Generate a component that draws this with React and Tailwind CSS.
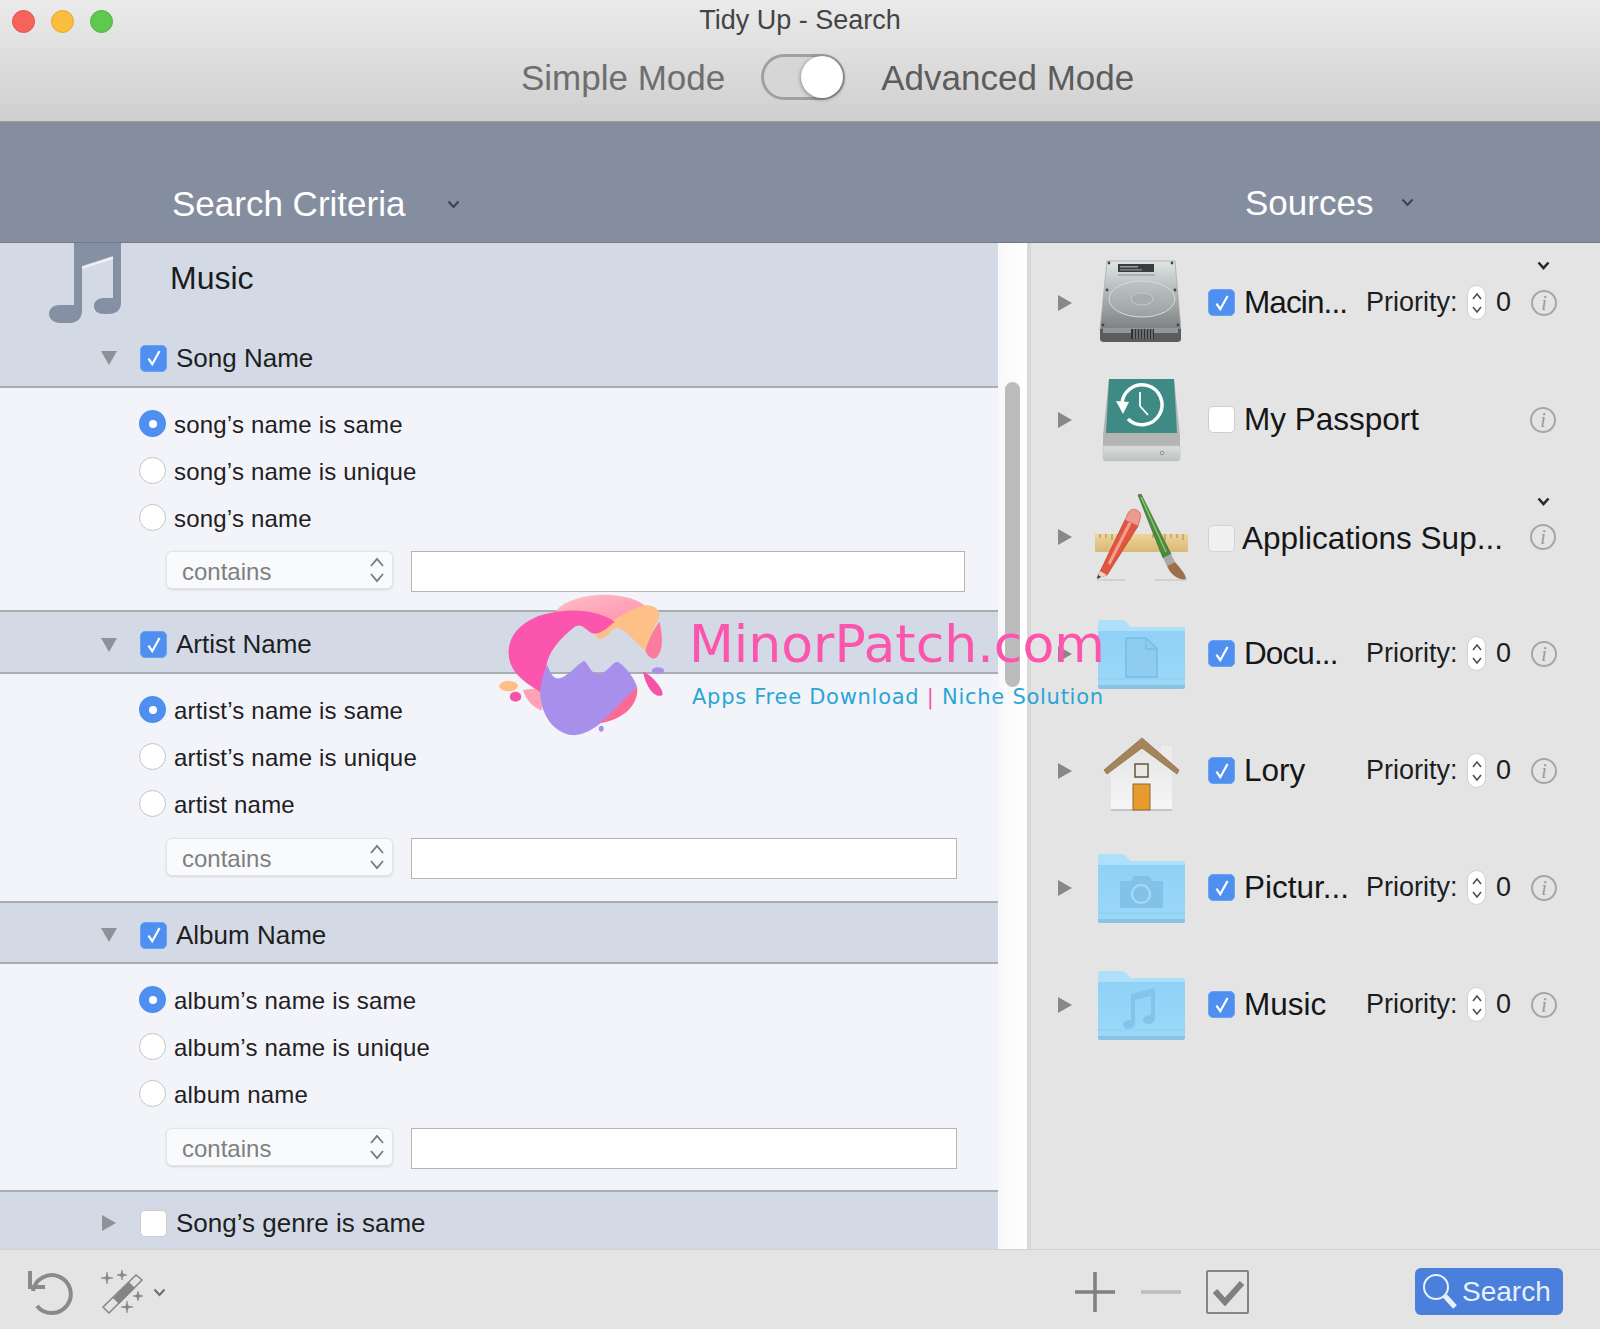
const sans = { fontFamily: '"Liberation Sans", Arial, sans-serif' };

const Check = () => (
  <svg viewBox="0 0 26 26" className="w-[18px] h-[20px]">
    <path d="M5 14l5.5 8L21 3" fill="none" stroke="#fff" strokeWidth="3.2" />
  </svg>
);

const Checkbox = ({ checked, dim }) => (
  <div
    className={
      checked
        ? 'w-[27px] h-[27px] shrink-0 rounded-[5px] bg-[#4f8ff0] border border-[#6aa2f4] flex items-center justify-center'
        : dim
          ? 'w-[27px] h-[27px] shrink-0 rounded-[5px] bg-[#f0f0f0] border border-[#d2d2d2]'
          : 'w-[27px] h-[27px] shrink-0 rounded-[5px] bg-white border border-[#cdcdcd]'
    }
  >
    {checked && <Check />}
  </div>
);

const Radio = ({ on }) => (
  <div
    className={
      on
        ? 'w-[27px] h-[27px] shrink-0 rounded-full bg-[#4f8ff0] flex items-center justify-center'
        : 'w-[27px] h-[27px] shrink-0 rounded-full bg-white border border-[#c4c4c4]'
    }
  >
    {on && <div className="w-[8px] h-[8px] rounded-full bg-white" />}
  </div>
);

const Tri = ({ open, color = '#8d9198' }) => (
  <svg viewBox="0 0 16 16" className="w-[16px] h-[16px] shrink-0">
    <path d={open ? 'M0 1H16L8 15Z' : 'M1 0V16L15 8Z'} fill={color} />
  </svg>
);

const Chevron = ({ color = '#3c4350', width = 2 }) => (
  <svg viewBox="0 0 13 9" className="w-[13px] h-[9px]">
    <path d="M1.5 1.5L6.5 7L11.5 1.5" fill="none" stroke={color} strokeWidth={width} />
  </svg>
);

const SectionHead = ({ label, checked, open, className }) => (
  <div className={`flex items-center pl-[101px] bg-[#d3dae5] ${className}`}>
    <Tri open={open} />
    <div className="ml-[23px]">
      <Checkbox checked={checked} />
    </div>
    <span className="ml-[9px] text-[26px] text-[#1d1f22]">{label}</span>
  </div>
);

const Options = ({ options, inputWidth, rowGap, className }) => (
  <div className={`bg-[#f2f4f9] pt-[12px] ${className}`}>
    {options.map((o, i) => (
      <div key={o} className="flex items-center h-[47px] pl-[139px]">
        <Radio on={i === 0} />
        <span className="ml-[8px] pt-[3px] text-[24px] tracking-[0.2px] text-[#1f2023]">{o}</span>
      </div>
    ))}
    <div className={`flex items-start pl-[166px] ${rowGap}`}>
      <div className="w-[227px] h-[38px] flex items-center justify-between pl-[15px] pr-[7px] rounded-[6px] bg-[#f9fafc] border border-[#e3e4e8] shadow-sm">
        <span className="pt-[3px] text-[24px] text-[#7f7f81]">contains</span>
        <svg viewBox="0 0 16 28" className="w-[16px] h-[28px]">
          <path d="M2 10L8 3L14 10M2 18L8 25L14 18" fill="none" stroke="#77797d" strokeWidth="1.8" />
        </svg>
      </div>
      <div className={`ml-[18px] h-[41px] bg-white border border-[#b4b4b4] ${inputWidth}`} />
    </div>
  </div>
);

const NoteIcon = () => (
  <svg viewBox="0 0 72 81" className="w-[72px] h-[81px]">
    <path
      d="M25 0H72V60C72 67 67 71 60 71H55C49 71 45 68 45 63C45 58 49 55 55 55H64V13L33 23V68C33 75 28 80 21 80H11C5 80 0 76 0 71C0 65 5 62 11 62H25Z"
      fill="#8590a5"
    />
    <path d="M33 25L64 15" stroke="#eef1f6" strokeWidth="2" />
  </svg>
);

const HddIcon = () => (
  <svg viewBox="0 0 95 90" className="w-[95px] h-[90px]">
    <defs>
      <linearGradient id="hdd" x1="0" y1="0" x2="0" y2="1">
        <stop offset="0" stopColor="#dfe6e6" />
        <stop offset="1" stopColor="#7b8080" />
      </linearGradient>
      <linearGradient id="plat" x1="0" y1="0" x2="0" y2="1">
        <stop offset="0" stopColor="#bcc5c5" />
        <stop offset="1" stopColor="#9aa1a1" />
      </linearGradient>
    </defs>
    <path d="M12 3H80L86 72H5Z" fill="url(#hdd)" stroke="#a6acac" strokeWidth="0.8" />
    <path d="M5 71H86V81Q86 84 82 84H9Q5 84 5 81Z" fill="#5a5d5f" />
    <path d="M8 70H83V75H8Z" fill="#93979a" />
    <ellipse cx="47" cy="41" rx="33" ry="18" fill="url(#plat)" stroke="#d7dddd" strokeWidth="1" />
    <ellipse cx="47" cy="41" rx="11" ry="6" fill="#a5adad" stroke="#c4cbcb" strokeWidth="1" />
    <rect x="23" y="6" width="36" height="8" fill="#3b3e40" />
    <rect x="25" y="8" width="18" height="1.5" fill="#9a9d9f" />
    <rect x="25" y="11" width="22" height="1.5" fill="#7d8082" />
    <path d="M23 17H60" stroke="#8a8f90" strokeWidth="1" />
    <rect x="36" y="71" width="23" height="10" fill="#2f3133" />
    <path d="M39 71V81M42 71V81M45 71V81M48 71V81M51 71V81M54 71V81M57 71V81" stroke="#a8abad" strokeWidth="1" />
    <circle cx="14" cy="5" r="1.4" fill="#444" />
    <circle cx="77" cy="5" r="1.4" fill="#444" />
    <circle cx="12" cy="32" r="1.4" fill="#444" />
    <circle cx="80" cy="32" r="1.4" fill="#444" />
    <circle cx="8" cy="67" r="1.4" fill="#444" />
    <circle cx="83" cy="67" r="1.4" fill="#444" />
  </svg>
);

const TimeMachineIcon = () => (
  <svg viewBox="0 0 95 90" className="w-[95px] h-[90px]">
    <defs>
      <linearGradient id="tmb" x1="0" y1="0" x2="0" y2="1">
        <stop offset="0" stopColor="#dcdfdf" />
        <stop offset="1" stopColor="#bcc0c0" />
      </linearGradient>
    </defs>
    <path d="M14 4H79L85 60V72H8V60Z" fill="#b4b4b4" />
    <path d="M14 4H79L82 58H11Z" fill="#3e8b86" />
    <path d="M8 71H85V83Q85 86 82 86H11Q8 86 8 83Z" fill="url(#tmb)" stroke="#c8caca" strokeWidth="0.8" />
    <circle cx="67" cy="78" r="1.8" fill="none" stroke="#909494" />
    <path d="M27 30A20 20 0 1 1 33 44" fill="none" stroke="#fff" strokeWidth="3.5" />
    <path d="M21 26L34 27L28 39Z" fill="#fff" />
    <path d="M45 17V31L53 40" fill="none" stroke="#fff" strokeWidth="1.8" />
  </svg>
);

const AppIcon = () => (
  <svg viewBox="0 0 95 90" className="w-[95px] h-[90px]">
    <defs>
      <linearGradient id="rul" x1="0" y1="0" x2="0" y2="1">
        <stop offset="0" stopColor="#efd49a" />
        <stop offset="1" stopColor="#d9b877" />
      </linearGradient>
    </defs>
    <rect x="0" y="42" width="93" height="18" fill="url(#rul)" />
    <path d="M5 42v4M11 42v4M17 42v6M23 42v4M29 42v4M35 42v6M58 42v4M64 42v4M70 42v6M76 42v4M82 42v4M88 42v6" stroke="#a4864e" strokeWidth="1" />
    <path d="M2 86L30 28L43 34L12 83Z" fill="#e2553f" stroke="#bf3f2d" strokeWidth="0.8" />
    <path d="M14 72L36 29" stroke="#f3a08e" strokeWidth="3" />
    <path d="M2 87L5 79L12 83Z" fill="#e8d8bf" />
    <path d="M2 87L3.5 83L6 85Z" fill="#333" />
    <path d="M30 28L33 21A6.5 6.5 0 0 1 45 27L43 34Z" fill="#ee9a8e" stroke="#cc6a5c" strokeWidth="0.8" />
    <path d="M43 3L46 2L76 62L68 66Z" fill="#4c8a3c" stroke="#33692a" strokeWidth="0.6" />
    <path d="M46 5L71 60" stroke="#8cc274" strokeWidth="1.5" />
    <path d="M68 66L76 62L80 70L72 74Z" fill="#a7a9ab" />
    <path d="M72 74L80 70C85 76 91 82 91 87C86 89 76 84 72 74Z" fill="#9c7048" />
    <path d="M60 88H92M2 88H30" stroke="#9a9a9a" strokeWidth="1" opacity="0.5" />
  </svg>
);

const FolderIcon = ({ id, children }) => (
  <svg viewBox="0 0 95 90" className="w-[95px] h-[90px]">
    <defs>
      <linearGradient id={id} x1="0" y1="0" x2="0" y2="1">
        <stop offset="0" stopColor="#90d1f6" />
        <stop offset="1" stopColor="#9ad8f9" />
      </linearGradient>
    </defs>
    <path d="M3 78V14Q3 11 6 11H27Q30 11 32 14L35 18H88Q90 18 90 21V78Z" fill="#aee0fb" />
    <path d="M3 22H90V76H3Z" fill={`url(#${id})`} />
    <path d="M3 70H90" stroke="#8fcdf0" strokeWidth="1" />
    <path d="M3 76H90V78Q90 80 88 80H5Q3 80 3 78Z" fill="#8ac2e2" />
    {children}
  </svg>
);

const HouseIcon = () => (
  <svg viewBox="0 0 95 90" className="w-[95px] h-[90px]">
    <defs>
      <linearGradient id="wall" x1="0" y1="0" x2="0" y2="1">
        <stop offset="0" stopColor="#e4e4e4" />
        <stop offset="1" stopColor="#f6f6f6" />
      </linearGradient>
    </defs>
    <rect x="66" y="20" width="11" height="16" fill="#ececec" />
    <path d="M16 40L47 17L77 40V84H16Z" fill="url(#wall)" />
    <path d="M16 83H77V85H16Z" fill="#c5c5c5" />
    <path d="M9 44L47 12L84 44L82 48L47 22L12 48Z" fill="#a4845a" stroke="#8c6f49" strokeWidth="0.8" />
    <rect x="40" y="38" width="13" height="13" fill="#e8e8e8" stroke="#6f5c42" strokeWidth="1.6" />
    <rect x="38" y="58" width="17" height="26" fill="#e99a2f" stroke="#8a6a34" strokeWidth="1" />
  </svg>
);

const Info = () => (
  <div
    className="w-[26px] h-[26px] shrink-0 rounded-full border-2 border-[#a6a6a6] flex items-center justify-center text-[20px] italic text-[#9a9a9a]"
    style={{ fontFamily: '"Liberation Serif", serif' }}
  >
    i
  </div>
);

const Stepper = () => (
  <div className="w-[19px] h-[35px] rounded-full bg-white border border-[#d0d0d0] flex items-center justify-center">
    <svg viewBox="0 0 12 26" className="w-[12px] h-[26px]">
      <path d="M2 9L6 4L10 9M2 17L6 22L10 17" fill="none" stroke="#4a4a4a" strokeWidth="1.5" />
    </svg>
  </div>
);

const sources = [
  { name: 'Macin...', on: true, pri: true, tight: true, icon: <HddIcon />, chev: 'top-[17px]' },
  { name: 'My Passport', on: false, icon: <TimeMachineIcon /> },
  { name: 'Applications Sup...', on: false, dim: true, icon: <AppIcon />, chev: 'top-[19px]' },
  {
    name: 'Docu...',
    on: true,
    pri: true,
    tight: true,
    icon: (
      <FolderIcon id="f1">
        <path d="M31 29H51L62 40V68H31Z" fill="#8fcdf0" stroke="#7fc0e6" strokeWidth="2" />
        <path d="M51 29V40H62" fill="none" stroke="#7fc0e6" strokeWidth="2" />
      </FolderIcon>
    ),
  },
  { name: 'Lory', on: true, pri: true, icon: <HouseIcon /> },
  {
    name: 'Pictur...',
    on: true,
    pri: true,
    icon: (
      <FolderIcon id="f2">
        <path d="M25 38H36L39 33H54L57 38H68V65H25Z" fill="#83c2e8" />
        <circle cx="46" cy="51" r="9" fill="none" stroke="#a9dcf8" strokeWidth="2" />
      </FolderIcon>
    ),
  },
  {
    name: 'Music',
    on: true,
    pri: true,
    icon: (
      <FolderIcon id="f3">
        <path
          d="M36 34L60 28V58C60 62 56 64 53 64C50 64 48 62 48 60C48 57 51 55 56 55V36L40 40V64C40 67 36 69 33 69C30 69 28 67 28 65C28 62 31 60 36 60Z"
          fill="#84c4ea"
        />
      </FolderIcon>
    ),
  },
];

const Watermark = () => (
  <div className="absolute left-[480px] top-[580px] w-[640px] h-[170px]">
    <svg viewBox="0 0 1568 510" preserveAspectRatio="none" className="absolute inset-0 w-[640px] h-[170px]">
      <defs>
        <linearGradient id="wm1" x1="0" y1="0" x2="1" y2="1">
          <stop offset="0" stopColor="#ffc0c8" />
          <stop offset="1" stopColor="#ff8fae" />
        </linearGradient>
      </defs>
      <path d="M185 92C215 55 270 42 320 45C360 48 390 62 405 78L330 125Z" fill="url(#wm1)" />
      <path d="M105 330C115 365 130 380 150 392L170 320Z" fill="#ffa3b4" />
      <path d="M405 210C415 170 430 140 440 125C448 170 450 215 430 235C420 240 408 225 405 210Z" fill="#fb7c9f" />
      <path d="M280 158C320 130 350 95 395 78C420 70 440 85 440 105C430 140 415 170 405 210C380 190 360 150 335 142C320 150 310 175 295 178C285 175 283 165 280 158Z" fill="#ffc088" />
      <path d="M70 215C72 150 120 105 190 95C250 85 300 100 330 125C315 140 295 165 275 160C260 150 250 130 235 138C200 170 165 215 162 265C165 285 150 330 147 335C100 300 70 270 70 215Z" fill="#fb55ad" />
      <path d="M147 335C150 300 158 270 165 255C172 280 180 298 195 295C215 290 240 250 255 242C268 255 270 280 290 282C310 280 325 245 337 245C355 255 378 295 385 320C370 350 330 405 295 430C270 455 245 468 225 465C190 460 150 420 147 335Z" fill="#a98fec" />
      <path d="M385 322C390 375 350 420 293 430C325 400 360 345 385 322Z" fill="#fb6a97" />
      <ellipse cx="70" cy="318" rx="23" ry="16" fill="#ffc088" />
      <ellipse cx="87" cy="350" rx="14" ry="15" fill="#f552a8" />
      <path d="M400 275C420 285 450 325 447 345C430 358 405 320 400 275Z" fill="#f552a8" />
      <ellipse cx="436" cy="272" rx="15" ry="10" fill="#a98fec" />
      <ellipse cx="297" cy="446" rx="6" ry="9" fill="#a98fec" />
    </svg>
    <div
      className="absolute left-[209px] top-[32px] text-[52px] leading-[64px] whitespace-nowrap text-[#fb55ad]"
      style={{ fontFamily: '"DejaVu Sans", sans-serif' }}
    >
      MinorPatch.com
    </div>
    <div
      className="absolute left-[212px] top-[103px] text-[21px] leading-[28px] tracking-[0.73px] whitespace-nowrap text-[#2aa5d6]"
      style={{ fontFamily: '"DejaVu Sans", sans-serif' }}
    >
      Apps Free Download <span className="text-[#f05aa6]">|</span> Niche Solution
    </div>
  </div>
);

export default function App() {
  return (
    <div className="relative w-[1600px] h-[1329px] overflow-hidden flex flex-col bg-[#e4e4e4]" style={sans}>
      {/* title bar */}
      <div className="h-[122px] shrink-0 bg-gradient-to-b from-[#ebebeb] to-[#cfcfcf] border-b border-[#9b9b9b]">
        <div className="grid grid-cols-[1fr_auto_1fr] items-center h-[34px]">
          <div className="flex gap-[16px] pl-[12px]">
            <div className="w-[23px] h-[23px] rounded-full bg-[#f7635b] border border-[#e0504a]" />
            <div className="w-[23px] h-[23px] rounded-full bg-[#fbbd3c] border border-[#e5a82f]" />
            <div className="w-[23px] h-[23px] rounded-full bg-[#5fc94f] border border-[#4fb23f]" />
          </div>
          <div className="pb-[2px] text-[27px] text-[#444]">Tidy Up - Search</div>
          <div />
        </div>
        <div className="flex items-center gap-[36px] pl-[521px] h-[87px]">
          <span className="pt-[1px] text-[35px] text-[#6e6e6e]">Simple Mode</span>
          <div className="w-[84px] h-[46px] -mt-[2px] rounded-full bg-[#d6d6d6] border-[3px] border-[#a0a0a0] flex items-center justify-end">
            <div className="w-[42px] h-[42px] -mr-[1px] rounded-full bg-white shadow-[0_1px_4px_rgba(0,0,0,0.45)]" />
          </div>
          <span className="pt-[1px] text-[35px] text-[#5c5c5c]">Advanced Mode</span>
        </div>
      </div>

      {/* column headings */}
      <div className="h-[121px] shrink-0 flex bg-[#858e9f] border-b border-[#737b8a] pt-[58px]">
        <div className="w-[1246px] flex items-start pl-[172px]">
          <span className="text-[35px] leading-[48px] text-white">Search Criteria</span>
          <span className="ml-[42px] mt-[20px] flex">
            <Chevron />
          </span>
        </div>
        <div className="flex items-start -mt-[1px] -ml-[1px]">
          <span className="text-[35px] leading-[48px] text-white">Sources</span>
          <span className="ml-[28px] mt-[19px] flex">
            <Chevron />
          </span>
        </div>
      </div>

      {/* body */}
      <div className="h-[1007px] shrink-0 flex border-b border-[#d2d2d2]">
        <div className="w-[998px] shrink-0 flex flex-col">
          <div className="bg-[#d3dae5]">
            <div className="h-[87px] flex items-start pl-[49px]">
              <NoteIcon />
              <span className="ml-[49px] mt-[11px] text-[32px] text-[#1a1c1f]">Music</span>
            </div>
            <SectionHead label="Song Name" checked open className="h-[58px] border-b-2 border-[#a9acb1]" />
          </div>
          <Options
            options={['song’s name is same', 'song’s name is unique', 'song’s name']}
            inputWidth="w-[554px]"
            rowGap="mt-[10px]"
            className="pb-[18px]"
          />
          <SectionHead label="Artist Name" checked open className="h-[64px] pt-[5px] border-y-2 border-[#a9acb1]" />
          <Options
            options={['artist’s name is same', 'artist’s name is unique', 'artist name']}
            inputWidth="w-[546px]"
            rowGap="mt-[11px]"
            className="pb-[22px]"
          />
          <SectionHead label="Album Name" checked open className="h-[63px] pt-[5px] border-y-2 border-[#a9acb1]" />
          <Options
            options={['album’s name is same', 'album’s name is unique', 'album name']}
            inputWidth="w-[546px]"
            rowGap="mt-[11px]"
            className="pb-[21px]"
          />
          <SectionHead label="Song’s genre is same" className="flex-1 pt-[5px] border-t-2 border-[#a9acb1]" />
        </div>

        {/* scroll gutter */}
        <div className="w-[33px] shrink-0 bg-gradient-to-r from-[#f8f8f8] to-white border-r-4 border-[#d9d9d9] pl-[7px] pt-[139px]">
          <div className="w-[15px] h-[305px] rounded-full bg-[#bcbcbc]" />
        </div>

        {/* sources */}
        <div className="flex-1 pt-[1px]">
          {sources.map((s) => (
            <div key={s.name} className="relative h-[117px] flex items-center pl-[26px]">
              <Tri color="#888888" />
              <div className="ml-[22px] shrink-0 flex">{s.icon}</div>
              <div className={s.dim ? 'ml-[18px] mt-[4px]' : 'ml-[18px]'}>
                <Checkbox checked={s.on} dim={s.dim} />
              </div>
              <span
                className={
                  s.dim
                    ? 'ml-[7px] mt-[4px] text-[31.5px] whitespace-nowrap text-[#151618]'
                    : s.tight
                      ? 'ml-[9px] w-[122px] text-[31.5px] tracking-[-0.9px] whitespace-nowrap text-[#151618]'
                      : 'ml-[9px] w-[122px] text-[31.5px] whitespace-nowrap text-[#151618]'
                }
              >
                {s.name}
              </span>
              {s.pri && (
                <div className="flex items-center">
                  <span className="text-[27px] w-[101px] text-[#1c1d1f]">Priority:</span>
                  <Stepper />
                  <span className="ml-[10px] w-[35px] text-[27px] text-[#1c1d1f]">0</span>
                </div>
              )}
              {!s.pri && <div className="flex-1" />}
              <div className={s.pri ? '' : 'mr-[44px]'}>
                <Info />
              </div>
              {s.chev && (
                <div className={`absolute left-[506px] ${s.chev} flex`}>
                  <Chevron color="#2a2a2a" width={2.6} />
                </div>
              )}
            </div>
          ))}
        </div>
      </div>

      {/* footer */}
      <div className="flex-1 flex items-center pl-[24px] pt-[4px]">
        <svg viewBox="0 0 50 52" className="w-[50px] h-[52px]">
          <path d="M9 25A19 19 0 1 1 13 40" fill="none" stroke="#8a8a8a" strokeWidth="4" />
          <path d="M6 5V21H21" fill="none" stroke="#8a8a8a" strokeWidth="4" />
        </svg>
        <svg viewBox="0 0 50 50" className="ml-[24px] w-[50px] h-[50px]">
          <path d="M5 40L38 8L44 13L11 46Z" fill="none" stroke="#858585" strokeWidth="1.5" />
          <path d="M15 31L31 15L37 21L21 37Z" fill="#858585" />
          <path d="M9 5L10 10L15 11L10 12L9 17L8 12L3 11L8 10ZM24 3L25 7L29 8L25 9L24 13L23 9L19 8L23 7ZM40 24L41 28L45 29L41 30L40 34L39 30L35 29L39 28ZM29 34L30 39L35 40L30 41L29 46L28 41L23 40L28 39Z" fill="#858585" stroke="#858585" strokeWidth="0.6" />
        </svg>
        <span className="ml-[5px] mt-[2px] flex">
          <Chevron color="#6d6d6d" />
        </span>
        <svg viewBox="0 0 40 40" className="ml-[909px] w-[40px] h-[40px]">
          <path d="M20 0V40M0 20H40" stroke="#808080" strokeWidth="3.6" />
        </svg>
        <svg viewBox="0 0 40 40" className="ml-[26px] w-[40px] h-[40px]">
          <path d="M0 20H40" stroke="#bcbcbc" strokeWidth="3.6" />
        </svg>
        <div className="ml-[25px] w-[43px] h-[44px] border-2 border-[#858585] rounded-[2px] flex items-center justify-center">
          <svg viewBox="0 0 32 28" className="w-[32px] h-[28px]">
            <path d="M3 13L13 24L30 5" fill="none" stroke="#808080" strokeWidth="6" />
          </svg>
        </div>
        <div className="ml-[166px] w-[148px] h-[47px] rounded-[6px] bg-[#4a7fdc] flex items-center pl-[7px]">
          <svg viewBox="0 0 36 38" className="w-[36px] h-[38px]">
            <circle cx="14" cy="14" r="12" fill="none" stroke="#eaf1fc" strokeWidth="2" />
            <path d="M23 23L33 34" stroke="#eaf1fc" strokeWidth="5" />
          </svg>
          <span className="ml-[4px] text-[28px] text-[#e8f0fb]">Search</span>
        </div>
      </div>

      <Watermark />
    </div>
  );
}
